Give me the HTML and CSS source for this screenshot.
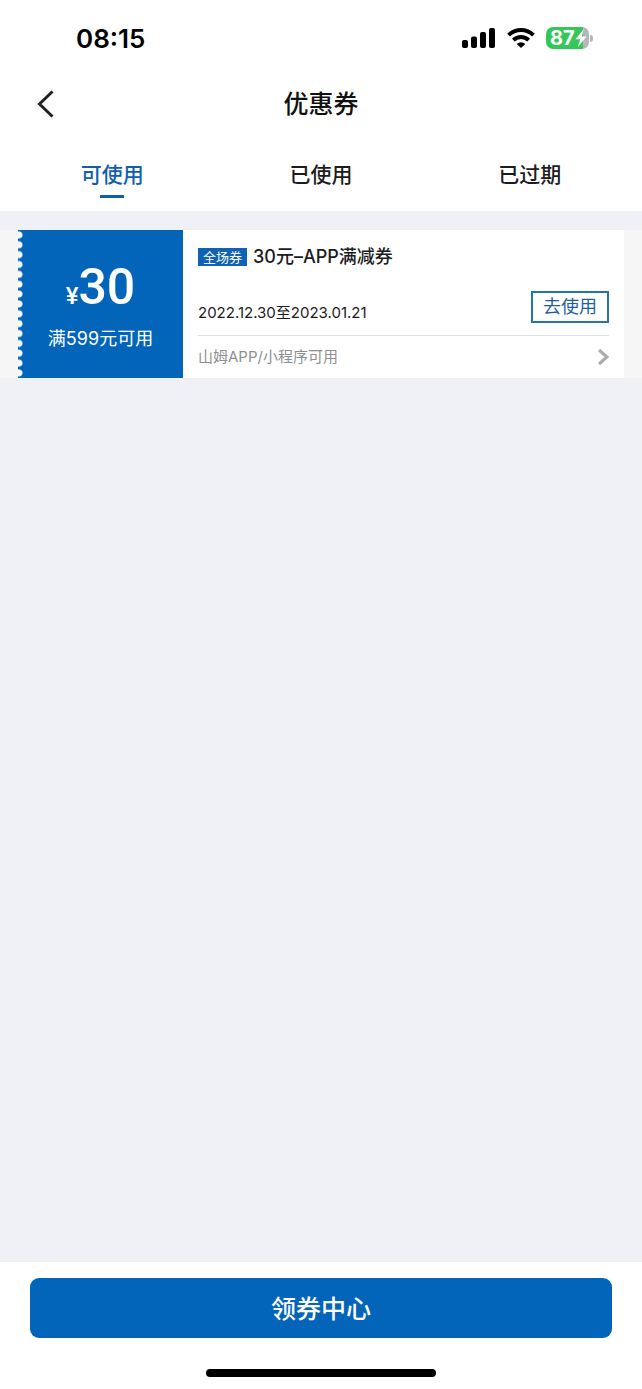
FILE: index.html
```html
<!DOCTYPE html>
<html lang="zh-CN">
<head>
<meta charset="utf-8">
<meta name="viewport" content="width=device-width, initial-scale=1">
<title>优惠券</title>
<link rel="stylesheet" href="styles.css">
</head>
<body>
<div class="app">
  <div class="status">
    <span class="clock">08:15</span>
    <div class="status-icons">
      <svg class="signal" width="34" height="22" viewBox="0 0 34 22" aria-hidden="true">
        <rect x="0" y="13" width="6" height="8" rx="2"/>
        <rect x="9" y="9.5" width="6" height="11.5" rx="2"/>
        <rect x="18" y="5" width="6" height="16" rx="2"/>
        <rect x="27" y="1" width="6" height="20" rx="2"/>
      </svg>
      <svg class="wifi" width="28" height="22" viewBox="0 0 28 22" aria-hidden="true">
        <path class="wave" d="M1.6 8.2a17.6 17.6 0 0 1 24.8 0"/>
        <path class="wave" d="M6.4 13.2a10.8 10.8 0 0 1 15.2 0"/>
        <path d="M9.7 17a6.2 6.2 0 0 1 8.6 0L14 21z"/>
      </svg>
      <span class="battery"><span class="level">87</span><svg class="bolt" width="12" height="18" viewBox="0 0 10 16" aria-hidden="true"><path d="M7.5 0 0 9h4.2L2.2 16 10 6.6H5.6z"/></svg></span>
    </div>
  </div>

  <header class="nav">
    <button class="back" type="button" aria-label="返回">
      <svg width="18" height="28" viewBox="0 0 18 28" aria-hidden="true"><path d="M16.5 1.5 3.5 14l13 12.5"/></svg>
    </button>
    <h1 class="title">优惠券</h1>
  </header>

  <nav class="tabs">
    <a class="tab active" href="#available" aria-current="page">可使用</a>
    <a class="tab" href="#used">已使用</a>
    <a class="tab" href="#expired">已过期</a>
  </nav>

  <main class="list">
    <article class="coupon">
      <div class="stub">
        <div class="amount"><span class="currency">¥</span>30</div>
        <div class="condition">满599元可用</div>
      </div>
      <div class="detail">
        <div class="heading">
          <span class="tag">全场券</span>
          <h2 class="name">30元–APP满减券</h2>
        </div>
        <div class="validity">
          <span class="dates">2022.12.30至2023.01.21</span>
          <button class="use" type="button">去使用</button>
        </div>
        <a class="scope" href="#details">
          <span>山姆APP/小程序可用</span>
          <svg width="12" height="18" viewBox="0 0 12 18" aria-hidden="true"><path d="M2 2l8 7-8 7"/></svg>
        </a>
      </div>
    </article>
  </main>

  <footer class="footer">
    <button class="center" type="button">领券中心</button>
    <div class="home"></div>
  </footer>
</div>
</body>
</html>
```
FILE: styles.css
```css
* {
  box-sizing: border-box;
}

body {
  margin: 0;
  background: #eff1f6;
  color: #1c1c1e;
  font-family: Inter, "Noto Sans CJK SC", sans-serif;
}

button {
  font-family: inherit;
  cursor: pointer;
}

a {
  color: inherit;
  text-decoration: none;
}

h1,
h2 {
  margin: 0;
}

.app {
  display: flex;
  flex-direction: column;
  min-height: 100vh;
}

.status {
  display: flex;
  justify-content: space-between;
  align-items: center;
  height: 76px;
  padding: 0 53px 0 76px;
  background: #fff;
  color: #000;
}

.clock {
  font-size: 26px;
  font-weight: 600;
}

.status-icons {
  display: flex;
  align-items: center;
  gap: 11px;
}

.wave {
  fill: none;
  stroke: #000;
  stroke-width: 4;
}

.battery {
  position: relative;
  display: flex;
  align-items: center;
  width: 43px;
  height: 22px;
  padding-left: 4px;
  border-radius: 7px;
  background: linear-gradient(90deg, #35c759 37px, #b4b6b8 37px);
  color: #fff;
}

.battery::after {
  content: "";
  position: absolute;
  left: 44px;
  top: 8px;
  width: 3px;
  height: 7px;
  border-radius: 0 3px 3px 0;
  background: #b4b6b8;
}

.level {
  font-size: 20px;
  font-weight: 700;
  line-height: 22px;
}

.bolt {
  flex: none;
  fill: #fff;
}

.nav {
  display: grid;
  grid-template-columns: 1fr auto 1fr;
  align-items: center;
  height: 56px;
  padding: 0 36px;
  background: #fff;
}

.back {
  display: flex;
  justify-self: start;
  padding: 0;
  border: 0;
  background: none;
}

.back path {
  fill: none;
  stroke: #222;
  stroke-width: 3;
}

.title {
  color: #111;
  font-size: 25px;
  font-weight: 500;
  line-height: 36px;
}

.tabs {
  display: flex;
  height: 79px;
  padding: 28px 8px 12px;
  background: #fff;
}

.tab {
  display: flex;
  flex: 1;
  flex-direction: column;
  align-items: center;
  gap: 5px;
  font-size: 21px;
  font-weight: 500;
  line-height: 30px;
}

.active {
  color: #0f5eb0;
}

.active::after {
  content: "";
  width: 24px;
  height: 3px;
  background: #0f5eb0;
}

.list {
  flex: 1;
  padding-top: 19px;
}

.coupon {
  display: flex;
  padding: 0 18px;
  background: #f6f6f6;
}

.stub {
  display: flex;
  flex: none;
  flex-direction: column;
  align-items: center;
  justify-content: center;
  gap: 6px;
  width: 165px;
  padding-top: 6px;
  background: radial-gradient(circle at 1px 50%, #f8fcff 3px, transparent 4px) 0 0 / 6px 10px #0265b9;
  background-repeat: no-repeat round;
  color: #fff;
}

.amount {
  font-family: Roboto, sans-serif;
  font-size: 50px;
  font-weight: 500;
  line-height: 48px;
}

.currency {
  font-size: 24px;
}

.condition {
  font-size: 18px;
  line-height: 26px;
}

.detail {
  flex: 1;
  padding: 14px 15px 0;
  background: #fff;
}

.heading {
  display: flex;
  align-items: center;
  gap: 6px;
}

.tag {
  padding: 0 5px;
  background: #0f62b4;
  color: #fff;
  font-size: 13px;
  line-height: 18px;
}

.name {
  font-size: 18px;
  font-weight: 500;
  line-height: 26px;
}

.validity {
  display: flex;
  justify-content: space-between;
  align-items: flex-end;
  height: 66px;
  padding-bottom: 12px;
  border-bottom: 1px solid #dfe0e2;
}

.dates {
  font-size: 15px;
  line-height: 20px;
}

.use {
  width: 78px;
  height: 32px;
  padding: 0;
  border: 2px solid #2474b4;
  background: #fff;
  color: #1f5f9f;
  font-size: 18px;
  line-height: 26px;
}

.scope {
  display: flex;
  justify-content: space-between;
  align-items: center;
  height: 42px;
  color: #8e8f92;
  font-size: 15px;
  line-height: 20px;
}

.scope path {
  fill: none;
  stroke: #a9aaac;
  stroke-width: 3;
}

.footer {
  display: flex;
  flex-direction: column;
  align-items: center;
  gap: 31px;
  padding: 16px 30px 12px;
  background: #fff;
}

.center {
  width: 100%;
  height: 60px;
  padding: 0 0 2px;
  border: 0;
  border-radius: 9px;
  background: #0265b9;
  color: #fff;
  font-size: 25px;
  font-weight: 500;
}

.home {
  width: 230px;
  height: 8px;
  border-radius: 4px;
  background: #000;
}
```
